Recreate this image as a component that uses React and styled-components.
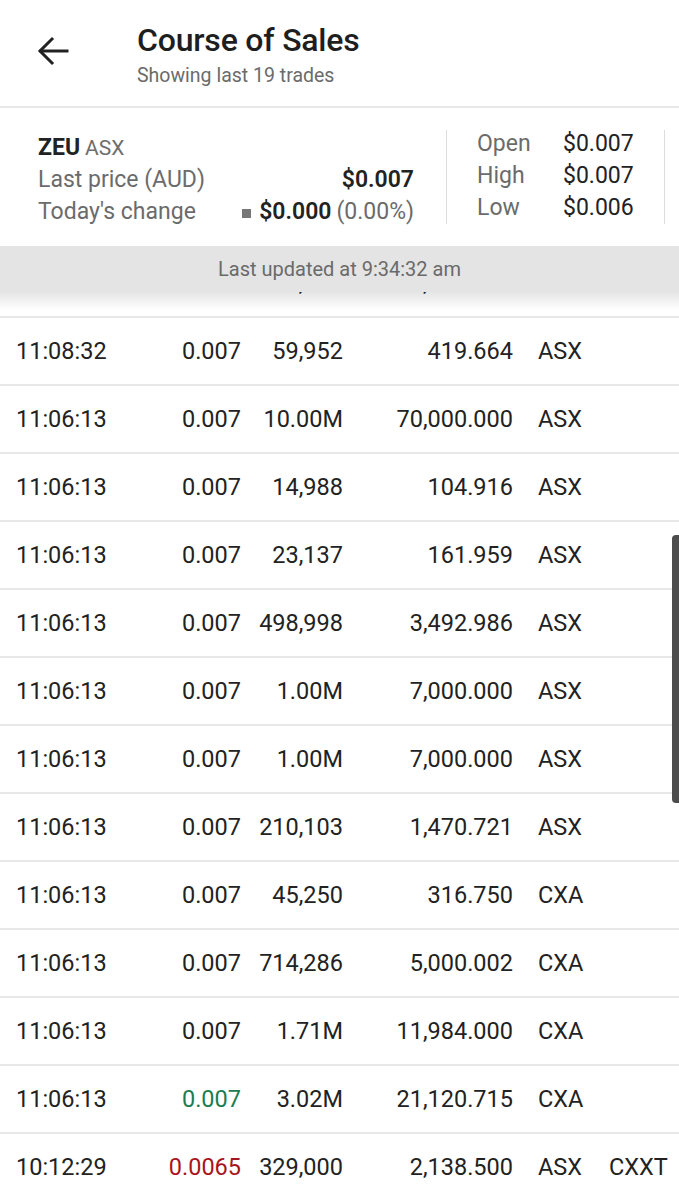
import React from 'react';
import styled, {createGlobalStyle} from "styled-components";

const GlobalStyle = createGlobalStyle`
  html, body {
    margin: 0;
    padding: 0;
    background: #ffffff;
  }
  body {
    font-family: Roboto, "Noto Sans", "Liberation Sans", sans-serif;
    color: #222222;
  }
`;

const Page = styled.div`
  width: 679px;
  height: 1200px;
  overflow: hidden;
  display: flex;
  flex-direction: column;
  position: relative;
  background: #fff;
`;

const Header = styled.div`
  height: 106px;
  display: flex;
  align-items: center;
  border-bottom: 2px solid #e8e8e8;
  flex-shrink: 0;
`;

const BackButton = styled.div`
  width: 137px;
  display: flex;
  align-items: center;
  padding-left: 36px;
  box-sizing: border-box;
  margin-top: -4px;
`;

const TitleBlock = styled.div`
  display: flex;
  flex-direction: column;
  margin-top: 2px;
`;

const Title = styled.h1`
  margin: 0;
  font-size: 32px;
  font-weight: 500;
  line-height: 40px;
  letter-spacing: -0.2px;
  color: #1e1e1e;
`;

const Subtitle = styled.div`
  font-size: 19.5px;
  line-height: 24px;
  color: #6b6b6b;
  margin-top: 4px;
`;

const InfoPanel = styled.div`
  height: 138px;
  display: flex;
  align-items: center;
  padding-left: 38px;
  flex-shrink: 0;
`;

const SummaryBlock = styled.div`
  width: 376px;
  display: flex;
  flex-direction: column;
  margin-top: 4px;
`;

const InfoLine = styled.div`
  display: flex;
  justify-content: space-between;
  align-items: center;
  height: 32px;
  font-size: 23px;
`;

const Symbol = styled.span`
  font-weight: 700;
  font-size: 23px;
  color: #222;
`;

const Exchange = styled.span`
  color: #6e6e6e;
  margin-left: 5px;
  font-size: 21px;
`;

const Label = styled.span`
  color: #6b6b6b;
`;

const Value = styled.span`
  color: #222;
  font-weight: ${({bold}) => bold ? 600 : 400};
  display: flex;
  align-items: center;
`;

const Square = styled.span`
  display: inline-block;
  width: 9px;
  height: 9px;
  background: #777;
  margin-right: 8px;
  margin-top: 4px;
`;

const Muted = styled.span`
  color: #6b6b6b;
  font-weight: 400;
  margin-left: 5px;
`;

const Divider = styled.div`
  width: 1px;
  height: 94px;
  background: #dddddd;
  margin: 0 ${({right}) => right ? 0 : 30}px 0 ${({right}) => right ? 0 : 32}px;
`;

const StatsGrid = styled.div`
  width: 187px;
  display: grid;
  grid-template-columns: 86px 1fr;
  grid-auto-rows: 32px;
  align-items: center;
  font-size: 23px;
  margin-top: -3px;
`;

const UpdatedBar = styled.div`
  height: 46px;
  background: #e4e4e4;
  display: flex;
  align-items: center;
  justify-content: center;
  font-size: 20px;
  color: #6a6a6a;
  flex-shrink: 0;
  position: relative;
  z-index: 2;
`;

const Viewport = styled.div`
  flex: 1;
  overflow: hidden;
  position: relative;
`;

const Shade = styled.div`
  position: absolute;
  top: 0;
  left: 0;
  right: 0;
  height: 18px;
  background: linear-gradient(rgba(0,0,0,0.1), rgba(0,0,0,0));
  z-index: 1;
`;

const TradeList = styled.div`
  margin-top: -42px;
`;

const TradeRow = styled.div`
  height: 66px;
  display: grid;
  grid-template-columns: 134px 91px 102px 170px 96px 1fr;
  align-items: center;
  padding-left: 16px;
  border-bottom: 2px solid #e8e8e8;
  font-size: 23.5px;
  color: #222;
`;

const Cell = styled.div`
  text-align: ${({align}) => align || "left"};
  padding-left: ${({pad}) => pad || 0}px;
  color: ${({tone}) => tone === "up" ? "#1b7d4f" : tone === "down" ? "#a8141c" : "#222"};
  white-space: nowrap;
`;

const Scrollbar = styled.div`
  position: absolute;
  right: 0;
  top: 535px;
  width: 7px;
  height: 268px;
  background: #4d4d4d;
  border-radius: 4px 0 0 4px;
  z-index: 3;
`;

const trades = [
  {time: "11:10:51", price: "0.007", volume: "254,751", value: "1,783.257", market: "CXA"},
  {time: "11:08:32", price: "0.007", volume: "59,952", value: "419.664", market: "ASX"},
  {time: "11:06:13", price: "0.007", volume: "10.00M", value: "70,000.000", market: "ASX"},
  {time: "11:06:13", price: "0.007", volume: "14,988", value: "104.916", market: "ASX"},
  {time: "11:06:13", price: "0.007", volume: "23,137", value: "161.959", market: "ASX"},
  {time: "11:06:13", price: "0.007", volume: "498,998", value: "3,492.986", market: "ASX"},
  {time: "11:06:13", price: "0.007", volume: "1.00M", value: "7,000.000", market: "ASX"},
  {time: "11:06:13", price: "0.007", volume: "1.00M", value: "7,000.000", market: "ASX"},
  {time: "11:06:13", price: "0.007", volume: "210,103", value: "1,470.721", market: "ASX"},
  {time: "11:06:13", price: "0.007", volume: "45,250", value: "316.750", market: "CXA"},
  {time: "11:06:13", price: "0.007", volume: "714,286", value: "5,000.002", market: "CXA"},
  {time: "11:06:13", price: "0.007", volume: "1.71M", value: "11,984.000", market: "CXA"},
  {time: "11:06:13", price: "0.007", volume: "3.02M", value: "21,120.715", market: "CXA", tone: "up"},
  {time: "10:12:29", price: "0.0065", volume: "329,000", value: "2,138.500", market: "ASX", condition: "CXXT", tone: "down"},
];

const BackArrow = () => (
  <svg width="34" height="34" viewBox="0 0 34 34" fill="none" stroke="#222" strokeWidth="3" strokeLinecap="square">
    <path d="M31 17H5" />
    <path d="M16 5L4 17l12 12" />
  </svg>
);

const App = () => {
  return (
    <Page>
      <GlobalStyle />
      <Header>
        <BackButton>
          <BackArrow />
        </BackButton>
        <TitleBlock>
          <Title>Course of Sales</Title>
          <Subtitle>Showing last 19 trades</Subtitle>
        </TitleBlock>
      </Header>

      <InfoPanel>
        <SummaryBlock>
          <InfoLine>
            <span><Symbol>ZEU</Symbol><Exchange>ASX</Exchange></span>
          </InfoLine>
          <InfoLine>
            <Label>Last price (AUD)</Label>
            <Value bold>$0.007</Value>
          </InfoLine>
          <InfoLine>
            <Label>Today's change</Label>
            <Value bold><Square />$0.000<Muted>(0.00%)</Muted></Value>
          </InfoLine>
        </SummaryBlock>
        <Divider />
        <StatsGrid>
          <Label>Open</Label><Value>$0.007</Value>
          <Label>High</Label><Value>$0.007</Value>
          <Label>Low</Label><Value>$0.006</Value>
        </StatsGrid>
        <Divider right />
      </InfoPanel>

      <UpdatedBar>Last updated at 9:34:32 am</UpdatedBar>

      <Viewport>
        <Shade />
        <TradeList>
          {trades.map((item, index) => (
            <TradeRow key={index}>
              <Cell>{item.time}</Cell>
              <Cell align="right" tone={item.tone}>{item.price}</Cell>
              <Cell align="right">{item.volume}</Cell>
              <Cell align="right">{item.value}</Cell>
              <Cell pad={25}>{item.market}</Cell>
              <Cell>{item.condition}</Cell>
            </TradeRow>
          ))}
        </TradeList>
      </Viewport>
      <Scrollbar />
    </Page>
  )
};

export default App;
